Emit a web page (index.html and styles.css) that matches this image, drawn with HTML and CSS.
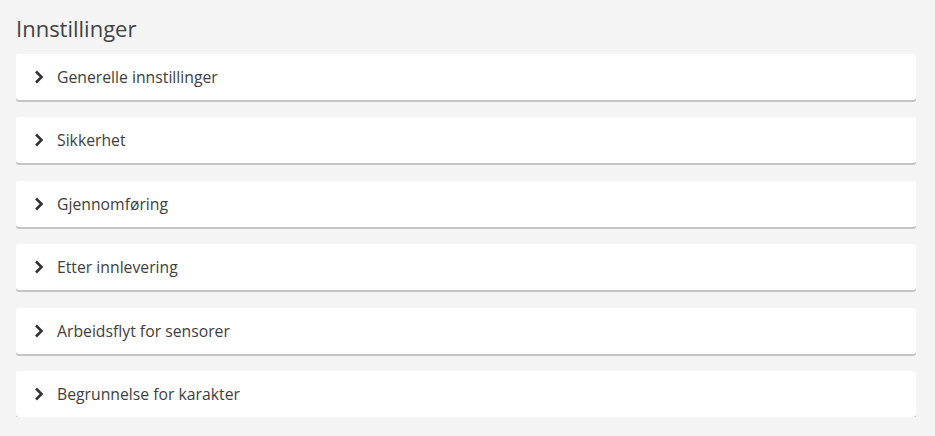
FILE: index.html
```html
<!DOCTYPE html>
<html lang="no">
<head>
    <meta charset="UTF-8">
    <title>Innstillinger</title>
    <link rel="stylesheet" href="styles.css">
</head>
<body>
    <main class="settings">
        <h1 class="settings-title">Innstillinger</h1>

        <div class="panel-list">
            <div class="panel">
                <svg class="chevron" viewBox="0 0 10 14"><path d="M2 1.5 L7.5 7 L2 12.5"/></svg>
                <span class="panel-label">Generelle innstillinger</span>
            </div>
            <div class="panel">
                <svg class="chevron" viewBox="0 0 10 14"><path d="M2 1.5 L7.5 7 L2 12.5"/></svg>
                <span class="panel-label">Sikkerhet</span>
            </div>
            <div class="panel">
                <svg class="chevron" viewBox="0 0 10 14"><path d="M2 1.5 L7.5 7 L2 12.5"/></svg>
                <span class="panel-label">Gjennomføring</span>
            </div>
            <div class="panel">
                <svg class="chevron" viewBox="0 0 10 14"><path d="M2 1.5 L7.5 7 L2 12.5"/></svg>
                <span class="panel-label">Etter innlevering</span>
            </div>
            <div class="panel">
                <svg class="chevron" viewBox="0 0 10 14"><path d="M2 1.5 L7.5 7 L2 12.5"/></svg>
                <span class="panel-label">Arbeidsflyt for sensorer</span>
            </div>
            <div class="panel">
                <svg class="chevron" viewBox="0 0 10 14"><path d="M2 1.5 L7.5 7 L2 12.5"/></svg>
                <span class="panel-label">Begrunnelse for karakter</span>
            </div>
        </div>
    </main>
</body>
</html>
```

FILE: styles.css
```css
body {
    margin: 0;
    background-color: #f4f4f5;
    font-family: 'Open Sans', sans-serif;
    color: #333;
}

.settings {
    padding: 13px 19px 0 16px;
}

.settings-title {
    margin: 0 0 11px;
    font-size: 22px;
    font-weight: normal;
    line-height: 30px;
    color: #444;
}

.panel-list {
    display: flex;
    flex-direction: column;
    gap: 17.4px;
}

.panel {
    display: flex;
    align-items: center;
    height: 46px;
    padding: 0 18px;
    background-color: #fff;
    border-radius: 3px;
    box-shadow: 0 2px 0 #c4c5c7;
}

.chevron {
    width: 10px;
    height: 14px;
    margin-right: 13px;
    fill: none;
    stroke: #333;
    stroke-width: 2.6;
    stroke-linecap: butt;
    stroke-linejoin: miter;
}

.panel-label {
    font-size: 15.75px;
    color: #404040;
}
```
